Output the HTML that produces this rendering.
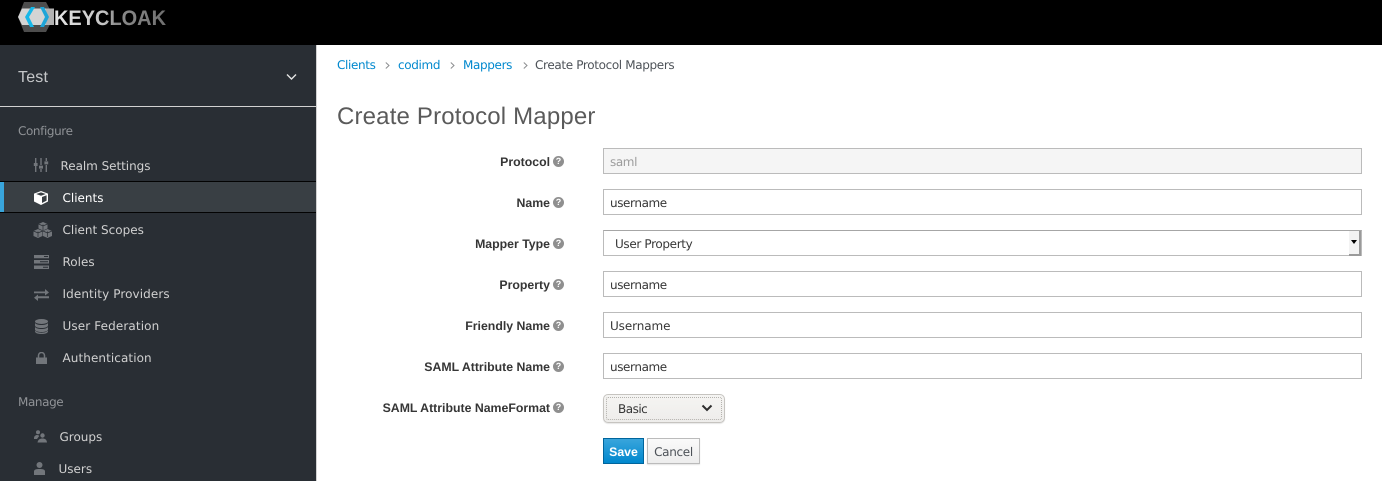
<!DOCTYPE html>
<html><head><meta charset="utf-8"><title>Create Protocol Mapper</title>
<style>
html,body{margin:0;padding:0;width:1382px;height:481px;overflow:hidden;background:#fff}
body{position:relative;font-family:"DejaVu Sans","Liberation Sans",sans-serif;font-size:12px;color:#363636;text-rendering:geometricPrecision}
.a,.t{position:absolute;white-space:nowrap}
.t{line-height:16px;letter-spacing:-.35px}
.head{left:0;top:0;width:1382px;height:45px;background:#000}
.side{left:0;top:45px;width:316px;height:436px;background:#292e34;border-right:1px solid #d1d1d1}
.nav{color:#d1d1d1;letter-spacing:0}
.cat{color:#8f9296;letter-spacing:-.4px}
.lab{right:832px;font-weight:bold;font-family:"Liberation Sans",sans-serif;font-size:12.300px;letter-spacing:0;color:#363636;text-align:right}
.q{position:absolute;left:553px;width:11px;height:11px;border-radius:50%;background:#8f8f8f;color:#fff;font:bold 9px/11px "Liberation Sans",sans-serif;text-align:center}
.inp{position:absolute;left:603px;width:757px;height:24px;border:1px solid #bbb;background:#fff;box-sizing:content-box}
.val{left:610px;letter-spacing:-.4px}
a{color:#0088ce;text-decoration:none}
</style></head><body>
<div class="a head"></div>
<svg class="a" style="left:16px;top:0" width="150" height="34" viewBox="0 0 150 34">
<defs><linearGradient id="g" x1="0" x2="1" y1="0" y2="0"><stop offset="0" stop-color="#e6e6e6"/><stop offset=".45" stop-color="#c4c4c4"/><stop offset=".55" stop-color="#8c8c8c"/><stop offset="1" stop-color="#707070"/></linearGradient></defs>
<path d="M8 2H30L38 17 30 32H8L2 17Z" fill="#4d4d4d"/>
<path d="M6 8.500H38V25H6L2 17Z" fill="#d4d4d4"/>
<path d="M30 8.500H38V25H30Z" fill="#b4b4b4"/>
<path d="M15 7H19L13 17 18 27H14L9 17Z" fill="#17b7e8"/>
<path d="M24 7H28L33 17 28 27H24L29 17Z" fill="#1fa5d8"/>
<text x="38" y="25" font-family="Liberation Sans" font-weight="bold" font-size="21" textLength="112" lengthAdjust="spacingAndGlyphs" fill="url(#g)">KEYCLOAK</text>
</svg>
<div class="a side"></div>
<div class="t" style="left:18px;top:68px;font-size:16px;line-height:20px;letter-spacing:.2px;color:#c4c6c8;font-family:'Liberation Sans',sans-serif">Test</div>
<svg class="a" style="left:286px;top:73px" width="11" height="8"><path d="M1 1.500L5.500 6 10 1.500" fill="none" stroke="#e4e4e4" stroke-width="1.400"/></svg>
<div class="a" style="left:0;top:106px;width:316px;height:1px;background:#d1d1d1"></div>
<div class="t cat" style="left:18px;top:123px">Configure</div>

<svg class="a" style="left:33px;top:157px" width="16" height="16" fill="#72767b"><path d="M2 1h1.400v5H2zM2 9h1.400v6H2zM7.300 1h1.400v7H7.300zM7.300 12h1.400v3H7.300zM12.600 1h1.400v3h-1.400zM12.600 8h1.400v7h-1.400z"/><path d="M.8 6h3.800v3H.8zM6 8.600h4v3H6zM11.400 4.400h3.800v3h-3.800z"/></svg>
<div class="t nav" style="left:60.500px;top:158px;letter-spacing:-.05px">Realm Settings</div>

<div class="a" style="left:0;top:181px;width:316px;height:32px;background:#393f44;border-top:1px solid #030303;border-bottom:1px solid #030303;box-sizing:border-box"></div>
<div class="a" style="left:0;top:182px;width:4px;height:30px;background:#39a5dc"></div>
<svg class="a" style="left:33px;top:190px" width="16" height="16"><path d="M8 1L15 3.600V11.500L8 15 1 11.500V3.600Z" fill="#fff"/><path d="M3.200 4L8 2.400 12.800 4 8 5.800Z" fill="#393f44"/><path d="M9 7L13.600 5.200V10.600L9 13Z" fill="#393f44"/></svg>
<div class="t" style="left:62.500px;top:190px;color:#fff;letter-spacing:0">Clients</div>

<svg class="a" style="left:33px;top:222px" width="20" height="16" fill="#72767b"><path d="M10 0L14.500 2V6.500L10 8.500 5.500 6.500V2Z"/><path d="M5 7L9.500 9V14L5 16 .5 14V9Z"/><path d="M14.500 7L19 9V14L14.500 16 10 14V9Z"/><path d="M5 9.500V15M14.500 9.500V15M10 2.500V8M.5 9L5 11 9.500 9M10 9L14.500 11 19 9M5.500 2L10 4 14.500 2" fill="none" stroke="#292e34" stroke-width=".7"/></svg>
<div class="t nav" style="left:62.500px;top:222px">Client Scopes</div>

<svg class="a" style="left:34px;top:255px" width="15" height="14" fill="#72767b"><path d="M0 0h15v3.200H0zM0 5h15v3.500H0zM0 10.500h15V14H0z"/><path d="M10 1h4v1h-4zM6 6.300h8v1H6zM9 11.700h5v1H9z" fill="#292e34"/></svg>
<div class="t nav" style="left:62.500px;top:254px">Roles</div>

<svg class="a" style="left:34px;top:289px" width="15" height="12" fill="#72767b"><path d="M0 2.500h11V0l4 3.500-4 3V4.300H0zM15 7.300H4V5.500L0 8.800l4 3.200V9.300h11z"/></svg>
<div class="t nav" style="left:62.500px;top:286px;letter-spacing:.1px">Identity Providers</div>

<svg class="a" style="left:35px;top:319px" width="13" height="15" fill="#72767b"><ellipse cx="6.500" cy="2.500" rx="6.500" ry="2.500"/><path d="M0 4v2.500C0 8 3 9 6.500 9S13 8 13 6.500V4c-1 1.400-3.500 2-6.500 2S1 5.400 0 4z"/><path d="M0 8v2.500C0 12 3 13 6.500 13s6.500-1 6.500-2.500V8c-1 1.400-3.500 2-6.500 2S1 9.400 0 8z"/><path d="M0 11.500V12.500C0 14 3 15 6.500 15s6.500-1 6.500-2.500v-1c-1 1.400-3.500 2.200-6.500 2.200S1 12.900 0 11.500z"/></svg>
<div class="t nav" style="left:62.500px;top:318px;letter-spacing:.12px">User Federation</div>

<svg class="a" style="left:36px;top:352px" width="11" height="12" fill="#72767b"><path d="M0 5.500h11V12H0z"/><path d="M2.500 6V3.500a3 3 0 0 1 6 0V6" fill="none" stroke="#72767b" stroke-width="1.500"/></svg>
<div class="t nav" style="left:62.500px;top:350px;letter-spacing:.08px">Authentication</div>

<div class="t cat" style="left:18px;top:394px">Manage</div>
<svg class="a" style="left:34px;top:430px" width="13" height="13" fill="#72767b"><circle cx="4" cy="2.300" r="2"/><path d="M0 8.500C0 6 1.500 5 3.200 5 4.400 5 5 5.600 5.200 6L3 9H0z"/><circle cx="8.500" cy="5.500" r="2.200"/><path d="M3.500 12.500C4 9.500 6 8.500 8.500 8.500s4.200 1 4.500 4z"/></svg>
<div class="t nav" style="left:59.500px;top:429px">Groups</div>
<svg class="a" style="left:34px;top:462px" width="11" height="13" fill="#72767b"><circle cx="5.500" cy="3" r="3"/><path d="M0 13V9.500C0 7.500 2 7 5.500 7S11 7.500 11 9.500V13z"/></svg>
<div class="t nav" style="left:58.500px;top:461px">Users</div>

<div class="t" style="left:337px;top:57px"><a>Clients</a></div>
<svg class="a" style="left:385px;top:62px" width="5" height="7"><path d="M.8.5L4 3.500.8 6.500" fill="none" stroke="#8b8d8f"/></svg>
<div class="t" style="left:398px;top:57px"><a>codimd</a></div>
<svg class="a" style="left:450px;top:62px" width="5" height="7"><path d="M.8.5L4 3.500.8 6.500" fill="none" stroke="#8b8d8f"/></svg>
<div class="t" style="left:463px;top:57px"><a>Mappers</a></div>
<svg class="a" style="left:523px;top:62px" width="5" height="7"><path d="M.8.5L4 3.500.8 6.500" fill="none" stroke="#8b8d8f"/></svg>
<div class="t" style="left:535px;top:57px;color:#4d5258">Create Protocol Mappers</div>
<div class="t" style="left:337px;top:102px;font-size:24px;line-height:30px;font-family:'Liberation Sans',sans-serif;font-weight:normal;letter-spacing:.17px;color:#5a5a5a">Create Protocol Mapper</div>

<div class="t lab" style="top:154px">Protocol</div><div class="q" style="top:156px">?</div>
<div class="inp" style="top:148px;background:#f5f5f5"></div>
<div class="t val" style="top:154px;color:#9c9c9c">saml</div>

<div class="t lab" style="top:195px">Name</div><div class="q" style="top:197px">?</div>
<div class="inp" style="top:189px"></div>
<div class="t val" style="top:195px">username</div>

<div class="t lab" style="top:236px">Mapper Type</div><div class="q" style="top:238px">?</div>
<div class="inp" style="top:230px;border-top-color:#a6a6a6"></div>
<div class="t" style="left:615px;top:236px">User Property</div>
<div class="a" style="left:1349px;top:231px;background:#f3f3f3;border-right:2px solid #9a9a9a;border-bottom:2px solid #9a9a9a;box-sizing:content-box;height:23px;width:10px"></div>
<svg class="a" style="left:1350px;top:240px" width="8" height="5"><path d="M1 0H7L4 4Z" fill="#000"/></svg>

<div class="t lab" style="top:277px">Property</div><div class="q" style="top:279px">?</div>
<div class="inp" style="top:271px"></div>
<div class="t val" style="top:277px">username</div>

<div class="t lab" style="top:318px">Friendly Name</div><div class="q" style="top:320px">?</div>
<div class="inp" style="top:312px"></div>
<div class="t val" style="top:318px;letter-spacing:-.1px">Username</div>

<div class="t lab" style="top:359px">SAML Attribute Name</div><div class="q" style="top:361px">?</div>
<div class="inp" style="top:353px"></div>
<div class="t val" style="top:359px">username</div>

<div class="t lab" style="top:400px">SAML Attribute NameFormat</div><div class="q" style="top:402px">?</div>
<div class="a" style="left:603px;top:394px;width:122px;height:29px;box-sizing:border-box;border:1px solid #c6c4c0;border-radius:5px;background:linear-gradient(#f5f4f2,#eeedeb);box-shadow:0 1px 1px rgba(0,0,0,.1)"></div>
<div class="a" style="left:606px;top:397px;width:116px;height:23px;box-sizing:border-box;border:1px dotted #b4b2ae;border-radius:2px"></div>
<div class="t" style="left:618px;top:401px;letter-spacing:-.5px">Basic</div>
<svg class="a" style="left:701px;top:404px" width="12" height="8"><path d="M1.500 1.500L6 6l4.500-4.500" fill="none" stroke="#2e2e2e" stroke-width="2"/></svg>

<div class="a" style="left:603px;top:438px;width:41px;height:26px;box-sizing:border-box;border:1px solid #00659c;background:linear-gradient(#39a5dc,#0088ce);color:#fff;font:bold 12.300px/25px 'Liberation Sans',sans-serif;text-align:center;padding-top:1px">Save</div>
<div class="a" style="left:647px;top:438px;width:53px;height:26px;box-sizing:border-box;border:1px solid #bbb;background:linear-gradient(#fafafa,#ededed);color:#4d5258;font:12px/25px 'DejaVu Sans',sans-serif;letter-spacing:-.3px;text-align:center;padding-top:1px;box-shadow:0 1px 1px rgba(0,0,0,.1)">Cancel</div>
</body></html>
